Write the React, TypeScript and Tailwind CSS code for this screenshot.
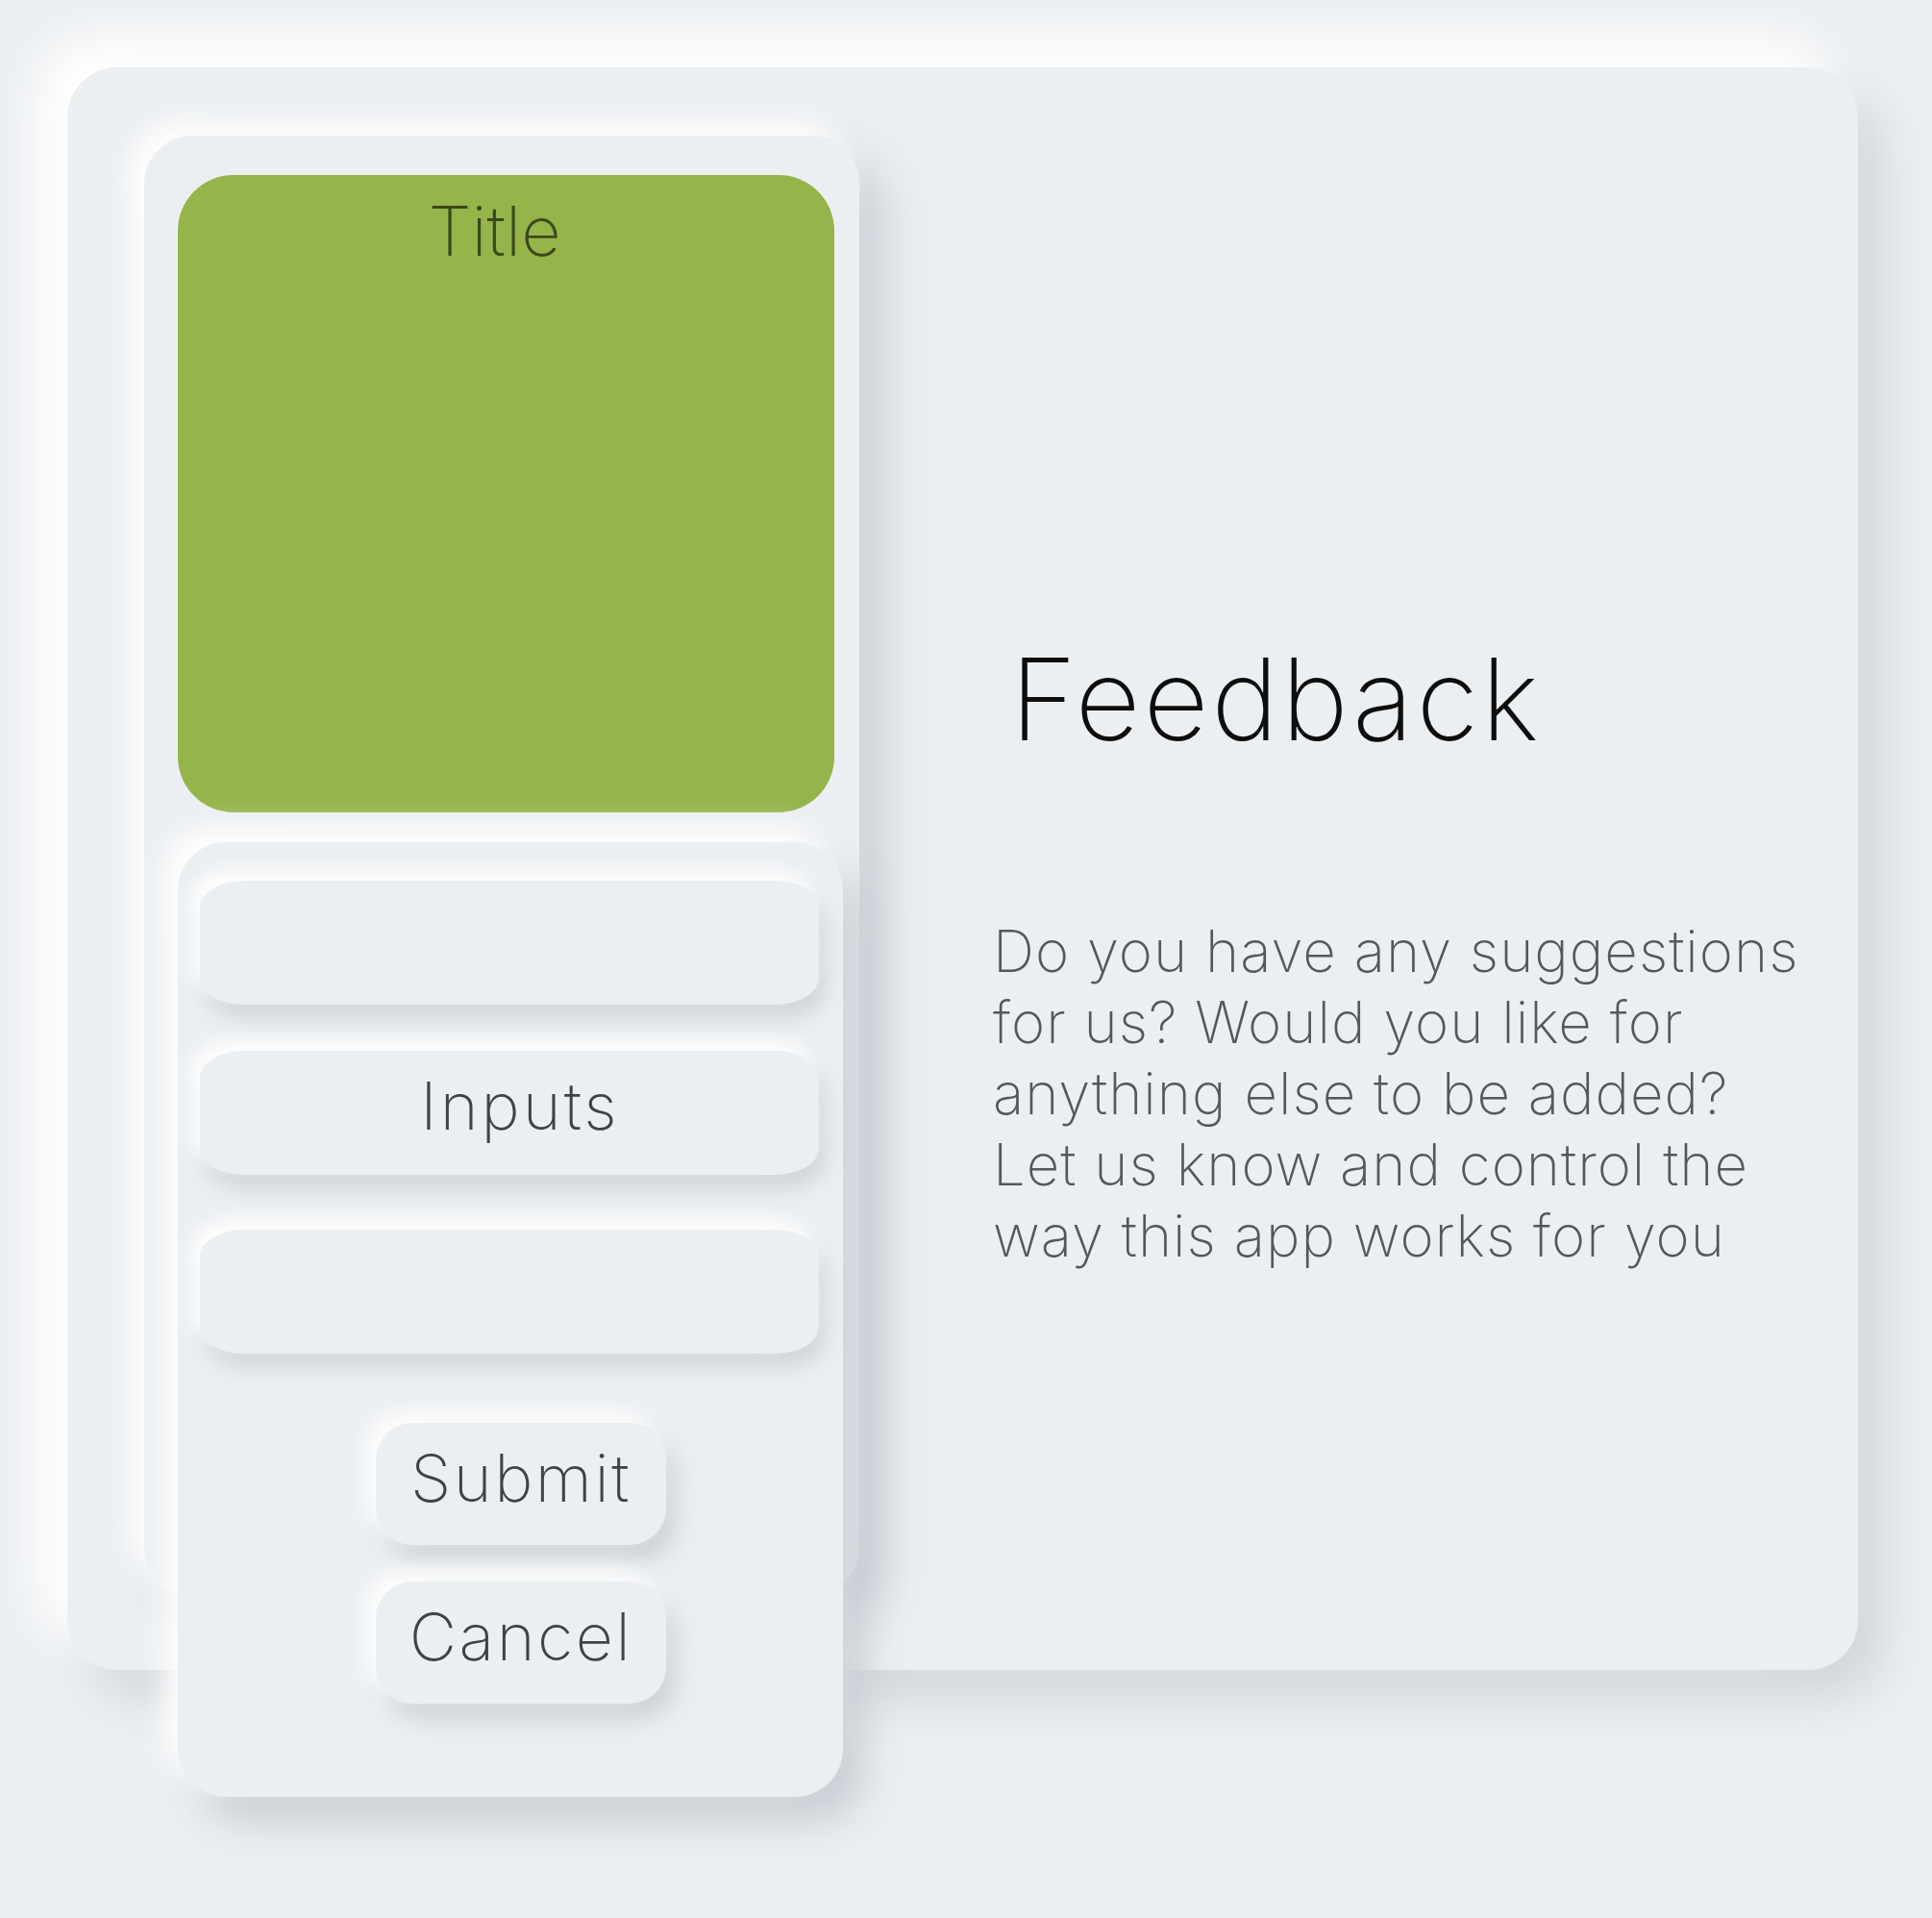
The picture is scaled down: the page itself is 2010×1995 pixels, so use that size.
import type { ReactNode } from "react";

const font = { fontFamily: "Inter, 'Open Sans', 'Liberation Sans', sans-serif" };

function Field({ className, children }: { className: string; children?: ReactNode }) {
	return (
		<div
			className={`flex h-[129px] w-[644px] items-center justify-center rounded-[45px/28px] bg-[#eceff2] shadow-[-8px_-10px_20px_#ffffff,6px_14px_22px_#cfd2d8] ${className}`}
		>
			{children}
		</div>
	);
}

function PillButton({ className, label }: { className: string; label: string }) {
	return (
		<button
			type="button"
			className={`ml-[183px] flex h-[127px] w-[302px] items-center justify-center rounded-[38px] bg-[#eceff2] pb-[14px] text-[68px] font-extralight tracking-[2.5px] text-[#3f4246] shadow-[-10px_-10px_24px_#ffffff,10px_16px_26px_#ccd0d6] ${className}`}
		>
			{label}
		</button>
	);
}

export default function App() {
	return (
		<div className="min-h-screen w-full bg-[#eceff2] pl-[70px] pt-[70px]" style={font}>
			<div className="flex h-[1667px] w-[1863px] rounded-[52px] bg-[#eceff2] shadow-[-30px_-30px_50px_#ffffff,26px_30px_50px_#d2d5da]">
				{/* left column */}
				<div className="ml-[80px] mt-[71px] h-[1519px] w-[744px] shrink-0 rounded-[50px] bg-[#eceff2] pl-[35px] pt-[41px] shadow-[-14px_-14px_30px_#ffffff,26px_24px_50px_#cacdd4]">
					<div className="flex h-[663px] w-[683px] justify-center rounded-[58px] bg-[#95b44a] pr-[24px] pt-[22px]">
						<span className="text-[72px] leading-none font-extralight text-black/60">Title</span>
					</div>

					<div className="mt-[31px] h-[993px] w-[692px] rounded-[50px] bg-[#eceff2] pl-[23px] pt-[40px] shadow-[-14px_-14px_30px_#ffffff,22px_26px_44px_#c9ccd3]">
						<Field className="" />
						<Field className="mt-[48px]">
							<span className="mb-[16px] ml-[22px] text-[68px] font-extralight tracking-[3px] text-[#3f4246]">
								Inputs
							</span>
						</Field>
						<Field className="mt-[57px]" />

						<PillButton className="mt-[72px]" label="Submit" />
						<PillButton className="mt-[38px]" label="Cancel" />
					</div>
				</div>

				{/* right column */}
				<div className="ml-[139px] flex flex-col pt-[598px]">
					<h1 className="ml-[18px] text-[118px] leading-none font-extralight tracking-[3px] text-[#0d0d0d]">
						Feedback
					</h1>
					<p className="mt-[166px] w-[860px] text-[60px] leading-[74px] font-extralight tracking-[1px] text-[#55575b]">
						Do you have any suggestions for us? Would you like for anything else to be added? Let us know
						and control the way this app works for you
					</p>
				</div>
			</div>
		</div>
	);
}
